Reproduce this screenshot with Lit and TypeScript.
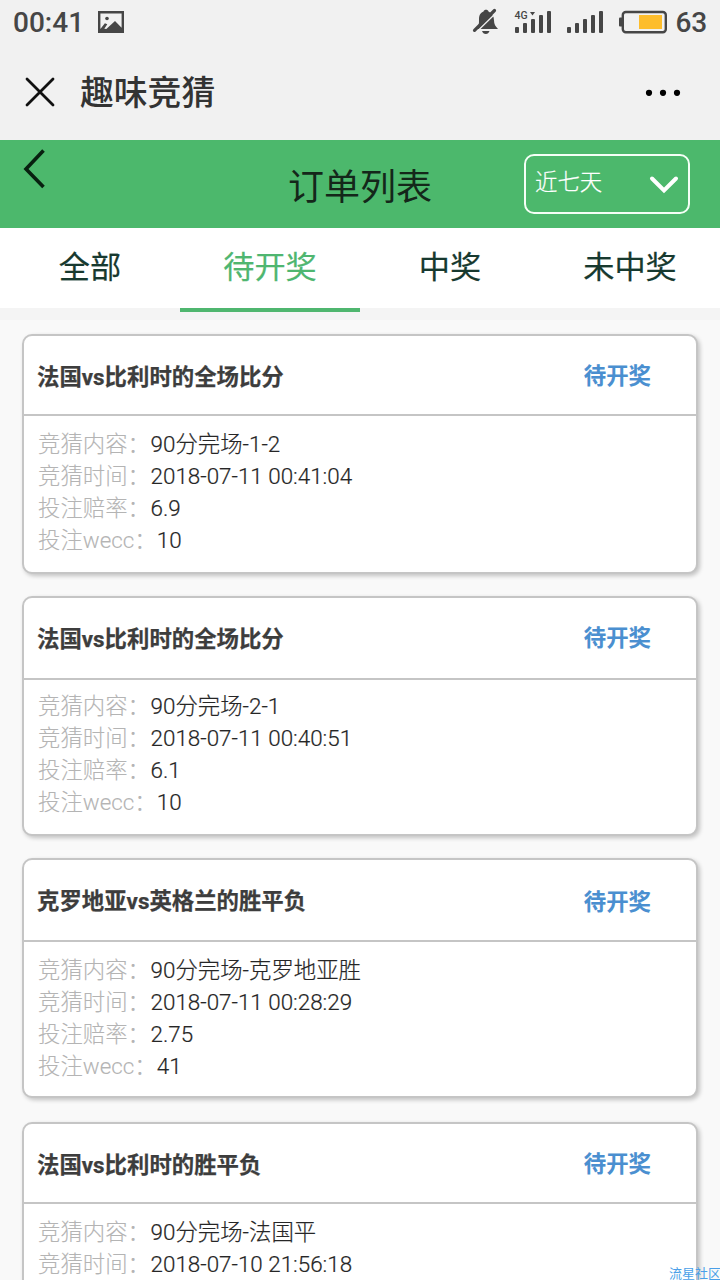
import { LitElement, html, css, svg } from "lit";
import { customElement, property } from "lit/decorators.js";
import { classMap } from "lit/directives/class-map.js";

interface Order {
  title: string;
  rows: [string, string][];
  variant: string;
}

const ORDERS: Order[] = [
  {
    title: "法国vs比利时的全场比分",
    rows: [["竞猜内容：", "90分完场-1-2"], ["竞猜时间：", "2018-07-11 00:41:04"], ["投注赔率：", "6.9"], ["投注wecc：", "10"]],
    variant: "",
  },
  {
    title: "法国vs比利时的全场比分",
    rows: [["竞猜内容：", "90分完场-2-1"], ["竞猜时间：", "2018-07-11 00:40:51"], ["投注赔率：", "6.1"], ["投注wecc：", "10"]],
    variant: "tight",
  },
  {
    title: "克罗地亚vs英格兰的胜平负",
    rows: [["竞猜内容：", "90分完场-克罗地亚胜"], ["竞猜时间：", "2018-07-11 00:28:29"], ["投注赔率：", "2.75"], ["投注wecc：", "41"]],
    variant: "tall",
  },
  {
    title: "法国vs比利时的胜平负",
    rows: [["竞猜内容：", "90分完场-法国平"], ["竞猜时间：", "2018-07-10 21:56:18"]],
    variant: "",
  },
];

@customElement("status-bar")
class StatusBar extends LitElement {
  static styles = css`
    :host { display: flex; align-items: center; height: 44px; padding: 0 13px 0 13px; color: #464646; }
    .time, .level { font: 500 28px/44px Roboto, sans-serif; padding-top: 2px; }
    .pic { margin-left: 14px; }
    .right { margin-left: auto; display: flex; align-items: center; }
    .level { margin-left: 8px; letter-spacing: -0.2px; }
    svg { display: block; }
    .net { font: 500 10.5px Roboto, sans-serif; }
  `;
  render() {
    const bars = [[0, 6], [8, 10], [16, 14], [24, 18], [32, 22]];
    const draw = (x0: number) => bars.map(([x, h]) => svg`<rect x=${x0 + x} y=${33 - h} width="4" height=${h} rx="1"/>`);
    return html`
      <span class="time">00:41</span>
      <svg class="pic" width="26" height="44" viewBox="0 0 26 44" fill="#464646">
        <path fill-rule="evenodd" d="M0 11h26v22H0zM2.400 13.400v15.500l4.500-5.600 2.400 1-3 4.500 2 .2L17 21l6.600 6.800V13.400z"/>
        <circle cx="9" cy="18.500" r="1.800"/>
      </svg>
      <div class="right">
        <svg width="196" height="44" viewBox="472 0 196 44" fill="#464646">
          <path d="M477 29c2-2.500 2-5.500 2-9.500 0-5 2-7 4.500-8 .5-2.300 4.500-2.300 5 0 3.500 1.500 5.500 4.500 5.500 9 0 3.500 1.500 6 4 8.500z"/>
          <path d="M482 31h7.500c-.8 2-1.800 3-3.700 3s-3.100-1-3.800-3z"/>
          <path d="M476.500 32L498 11" stroke="#f1f1f1" stroke-width="1.300"/>
          <path d="M474.500 30.300L494.500 10.500" stroke="#464646" stroke-width="3.200" stroke-linecap="round"/>
          <text class="net" x="514.500" y="18.500">4G</text>
          <path d="M530 12h5l-2.500 3.500z"/>
          ${draw(515)}
          ${draw(567)}
          <rect x="622.800" y="12" width="43" height="20.200" rx="3" fill="none" stroke="#464646" stroke-width="2.400"/>
          <rect x="619" y="17.500" width="4" height="9" rx="1"/>
          <rect x="639" y="15" width="23" height="14" fill="#fdbd2c"/>
        </svg>
        <span class="level">63</span>
      </div>
    `;
  }
}

@customElement("order-card")
class OrderCard extends LitElement {
  @property({ attribute: false }) order!: Order;
  static styles = css`
    :host { display: block; flex: none; }
    .card {
      box-sizing: border-box; height: 240px; border: 2px solid #c5c5c5; border-radius: 10px;
      background: #fff; box-shadow: 2px 2px 4px rgba(0, 0, 0, 0.22);
      font-family: Roboto, "Noto Sans CJK SC", sans-serif; font-size: 22.4px;
    }
    .head {
      box-sizing: border-box; display: flex; justify-content: space-between; height: 80px; line-height: 82px;
      padding: 0 45px 0 13px; border-bottom: 2px solid #c5c5c5; font-weight: 700; color: #3d3d3d;
      -webkit-text-stroke: 0.25px currentColor;
    }
    .status { color: #4a8fd0; line-height: 80px; -webkit-text-stroke-width: 0.1px; }
    .body { padding: 12px 14px 0; line-height: 32px; font-weight: 300; }
    .row { display: flex; height: 32px; white-space: pre; }
    .label { color: #b4b4b4; width: 112.6px; -webkit-text-stroke: 0.1px #b4b4b4; }
    .wide { width: auto; }
    .value { color: #262626; -webkit-text-stroke: 0.2px #262626; }
    .tall .head, .tight .head { height: 82px; }
    .tall .status { line-height: 84px; }
    .tight .body { padding-top: 10px; }
  `;
  render() {
    const o = this.order;
    return html`
      <div class=${classMap({ card: true, tall: o.variant === "tall", tight: o.variant === "tight" })}>
        <div class="head"><span>${o.title}</span><span class="status">待开奖</span></div>
        <div class="body">
          ${o.rows.map(([l, v]) => html`<div class="row"><span class=${classMap({ label: true, wide: l.includes("wecc") })}>${l}</span><span class="value">${v}</span></div>`)}
        </div>
      </div>
    `;
  }
}

@customElement("app-root")
class AppRoot extends LitElement {
  static styles = css`
    :host {
      display: flex; flex-direction: column; position: relative; width: 720px; height: 1280px;
      overflow: hidden; background: #f9f9f9; font-family: Roboto, "Noto Sans CJK SC", sans-serif;
    }
    .top { flex: none; height: 140px; background: #f1f1f1; }
    .nav { display: flex; align-items: center; height: 96px; padding: 0 39px 0 25px; }
    .nav-title { margin: 0 auto 0 25px; padding-top: 4px; font-size: 33.8px; line-height: 50px; font-weight: 500; color: #333; }
    .header {
      flex: none; display: grid; grid-template-columns: 1fr 144px 1fr; height: 88px;
      box-sizing: border-box; background: #4cb86c; padding: 0 30px 0 30px;
    }
    .back { margin: 9px 0 0 -7px; }
    .title { font-size: 36px; line-height: 96px; color: #14271a; white-space: nowrap; }
    .select {
      box-sizing: border-box; justify-self: end; margin-top: 14px; width: 166px; height: 60px;
      border: 2px solid #f4fff6; border-radius: 10px; display: flex; justify-content: space-between;
      padding: 0 9px 0 9px; font-size: 22.400px; font-weight: 300; line-height: 52px; color: #fff;
      -webkit-text-stroke: 0.2px #fff;
    }
    .tabs { flex: none; display: grid; grid-template-columns: repeat(4, 1fr); height: 92px; background: linear-gradient(#fff 80px, #f4f4f4 80px); }
    .tab { box-sizing: border-box; height: 84px; text-align: center; font-size: 31.2px; line-height: 79px; color: #17392f; border-bottom: 4px solid transparent; -webkit-text-stroke: 0.2px currentColor; }
    .active { color: #4fb670; border-bottom-color: #4fb66f; }
    .list { display: flex; flex-direction: column; gap: 22px; padding: 14px 22px 0; }
    .last { margin-top: 2px; }
    .mark { position: absolute; right: -1px; bottom: -3px; font-size: 13px; line-height: 18px; color: #4a9fe8; white-space: nowrap; }
    svg { display: block; }
  `;
  render() {
    const tabs = ["全部", "待开奖", "中奖", "未中奖"];
    return html`
      <div class="top">
        <status-bar></status-bar>
        <div class="nav">
          <svg width="30" height="30" viewBox="0 0 30 30"><path d="M2 2L28 28M28 2L2 28" stroke="#111" stroke-width="2.800" stroke-linecap="round"/></svg>
          <span class="nav-title">趣味竞猜</span>
          <svg width="36" height="8" viewBox="0 0 36 8"><circle cx="4" cy="4.800" r="3.100"/><circle cx="18" cy="4.800" r="3.100"/><circle cx="32" cy="4.800" r="3.100"/></svg>
        </div>
      </div>
      <div class="header">
        <svg class="back" width="24" height="40" viewBox="0 0 24 40"><path d="M20.500 1.500L3 20L20.500 38" fill="none" stroke="#082010" stroke-width="3.600"/></svg>
        <span class="title">订单列表</span>
        <div class="select">
          <span>近七天</span>
          <svg width="30" height="56" viewBox="0 0 30 56"><path d="M3 22.500L15 34.500L27 22.500" fill="none" stroke="#fff" stroke-width="4" stroke-linecap="round"/></svg>
        </div>
      </div>
      <div class="tabs">${tabs.map((t, i) => html`<div class=${classMap({ tab: true, active: i === 1 })}>${t}</div>`)}</div>
      <div class="list">${ORDERS.map((o, i) => html`<order-card class=${classMap({ last: i === 3 })} .order=${o}></order-card>`)}</div>
      <span class="mark">流星社区</span>
    `;
  }
}
